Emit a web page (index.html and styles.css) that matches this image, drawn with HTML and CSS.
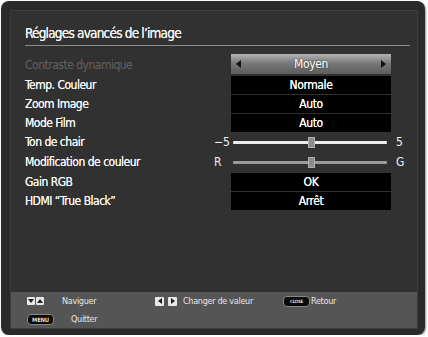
FILE: index.html
```html
<!DOCTYPE html>
<html lang="fr">
<head>
    <meta charset="UTF-8">
    <title>Réglages avancés de l'image</title>
    <link rel="stylesheet" href="styles.css">
</head>
<body>
    <div class="screen">
        <div class="panel">
            <div class="main">
                <div class="title">Réglages avancés de l’image</div>
                <div class="settings">
                    <div class="label disabled">Contraste dynamique</div>
                    <div class="value selector">
                        <span class="arrow left"></span>
                        <span>Moyen</span>
                        <span class="arrow right"></span>
                    </div>

                    <div class="label">Temp. Couleur</div>
                    <div class="value box">Normale</div>

                    <div class="label">Zoom Image</div>
                    <div class="value box">Auto</div>

                    <div class="label">Mode Film</div>
                    <div class="value box">Auto</div>

                    <div class="label">Ton de chair</div>
                    <div class="end min">−5</div>
                    <div class="value slider"><div class="track"></div><div class="thumb"></div></div>
                    <div class="end max">5</div>

                    <div class="label">Modification de couleur</div>
                    <div class="end min">R</div>
                    <div class="value slider dim"><div class="track"></div><div class="thumb"></div></div>
                    <div class="end max">G</div>

                    <div class="label">Gain RGB</div>
                    <div class="value box">OK</div>

                    <div class="label">HDMI “True Black”</div>
                    <div class="value box">Arrêt</div>
                </div>
            </div>
            <div class="footer">
                <div class="hint nav">
                    <span class="key"><span class="tri down"></span></span><span class="key"><span class="tri up"></span></span>
                    <span class="hint-text">Naviguer</span>
                </div>
                <div class="hint change">
                    <span class="key"><span class="tri left"></span></span><span class="key"><span class="tri right"></span></span>
                    <span class="hint-text">Changer de valeur</span>
                </div>
                <div class="hint back">
                    <span class="pill small">CLOSE</span>
                    <span class="hint-text tight">Retour</span>
                </div>
                <div class="hint quit">
                    <span class="pill">MENU</span>
                    <span class="hint-text">Quitter</span>
                </div>
            </div>
        </div>
    </div>
</body>
</html>
```

FILE: styles.css
```css
body, html {
    margin: 0;
    padding: 0;
    background-color: #ffffff;
    font-family: "DejaVu Sans Condensed", "Liberation Sans", sans-serif;
}
.screen {
    width: 424px;
    height: 334px;
    margin: 1px 0 0 1px;
    background-color: #2a2a2a;
    border-radius: 8px;
    box-shadow: 1px 1px 2px rgba(0, 0, 0, 0.4);
    padding: 9px 7px 8px 9px;
    box-sizing: border-box;
}
.panel {
    height: 100%;
    border: 1px solid #3e3e3e;
    background-color: #313131;
    display: flex;
    flex-direction: column;
}
.main {
    flex: 1;
    padding: 13px 7px 0 14px;
}
.title {
    color: #f2f2f2;
    font-size: 13.5px;
    letter-spacing: -0.8px;
    line-height: 18px;
    padding-bottom: 3px;
    border-bottom: 1px solid #8a8a8a;
    margin-bottom: 8px;
    text-shadow: 0 0 0.5px #fff;
}
.settings {
    display: grid;
    grid-template-columns: 187px 19px 160px 20px;
    grid-template-rows: 21px 19px 19px 19px 20px 20px 19px 19px;
}
.label {
    grid-column: 1;
    color: #f4f4f4;
    font-size: 12px;
    letter-spacing: -0.5px;
    display: flex;
    align-items: center;
    text-shadow: 0 0 0.5px #fff;
}
.label.disabled {
    color: #626262;
    text-shadow: none;
}
.value {
    grid-column: 3;
    color: #ffffff;
    font-size: 12px;
    letter-spacing: -0.4px;
    display: flex;
    align-items: center;
    justify-content: center;
    text-shadow: 0 0 0.5px #fff;
}
.box {
    background-color: #000000;
    margin-top: 1px;
}
.selector {
    background: linear-gradient(#b4b4b4, #7a7a7a 45%, #5c5c5c);
    margin-bottom: 1px;
    justify-content: space-between;
    padding: 0 5px;
    text-shadow: 0 0 2px #333;
}
.arrow {
    width: 0;
    height: 0;
    border-top: 4px solid transparent;
    border-bottom: 4px solid transparent;
}
.arrow.left {
    border-right: 5px solid #111;
}
.arrow.right {
    border-left: 5px solid #111;
}
.end {
    color: #f2f2f2;
    font-size: 12px;
    display: flex;
    align-items: center;
}
.end.min {
    grid-column: 2;
    padding-left: 2px;
}
.end.max {
    grid-column: 4;
    padding-left: 5px;
}
.slider {
    position: relative;
    padding: 0 4px 0 2px;
}
.track {
    flex: 1;
    height: 3px;
    background-color: #eeeeee;
    border-radius: 1px;
}
.slider.dim .track {
    background-color: #9a9a9a;
}
.thumb {
    position: absolute;
    left: 77px;
    top: 50%;
    width: 5px;
    height: 9px;
    margin-top: -5px;
    background-color: #8c8c8c;
    border: 1px solid #b0b0b0;
}
.footer {
    height: 36px;
    background-color: #555555;
    display: grid;
    grid-template-columns: 128px 128px 1fr;
    grid-template-rows: 18px 18px;
    padding-left: 16px;
    box-sizing: border-box;
}
.hint {
    display: flex;
    align-items: center;
    color: #e6e6e6;
    font-size: 9px;
    letter-spacing: -0.3px;
}
.hint.quit {
    grid-column: 1;
}
.key {
    width: 8px;
    height: 8px;
    background-color: #e8e8e8;
    border-radius: 1px;
    margin-right: 1px;
    display: flex;
    align-items: center;
    justify-content: center;
}
.change .key {
    width: 9px;
    height: 9px;
    margin-right: 4px;
}
.tri {
    width: 0;
    height: 0;
}
.tri.down {
    border-left: 3px solid transparent;
    border-right: 3px solid transparent;
    border-top: 4px solid #222;
}
.tri.up {
    border-left: 3px solid transparent;
    border-right: 3px solid transparent;
    border-bottom: 4px solid #222;
}
.tri.left {
    border-top: 3px solid transparent;
    border-bottom: 3px solid transparent;
    border-right: 4px solid #222;
}
.tri.right {
    border-top: 3px solid transparent;
    border-bottom: 3px solid transparent;
    border-left: 4px solid #222;
}
.hint-text {
    margin-left: 17px;
}
.change .hint-text {
    margin-left: 2px;
}
.hint-text.tight {
    margin-left: 1px;
}
.pill {
    width: 25px;
    height: 9px;
    background-color: #0a0a0a;
    border: 1px solid #888;
    border-radius: 4px;
    color: #ddd;
    font-size: 6px;
    font-weight: bold;
    line-height: 9px;
    text-align: center;
    box-sizing: content-box;
}
.pill.small {
    font-size: 4.5px;
}
.back {
    padding-left: 0;
}
```
